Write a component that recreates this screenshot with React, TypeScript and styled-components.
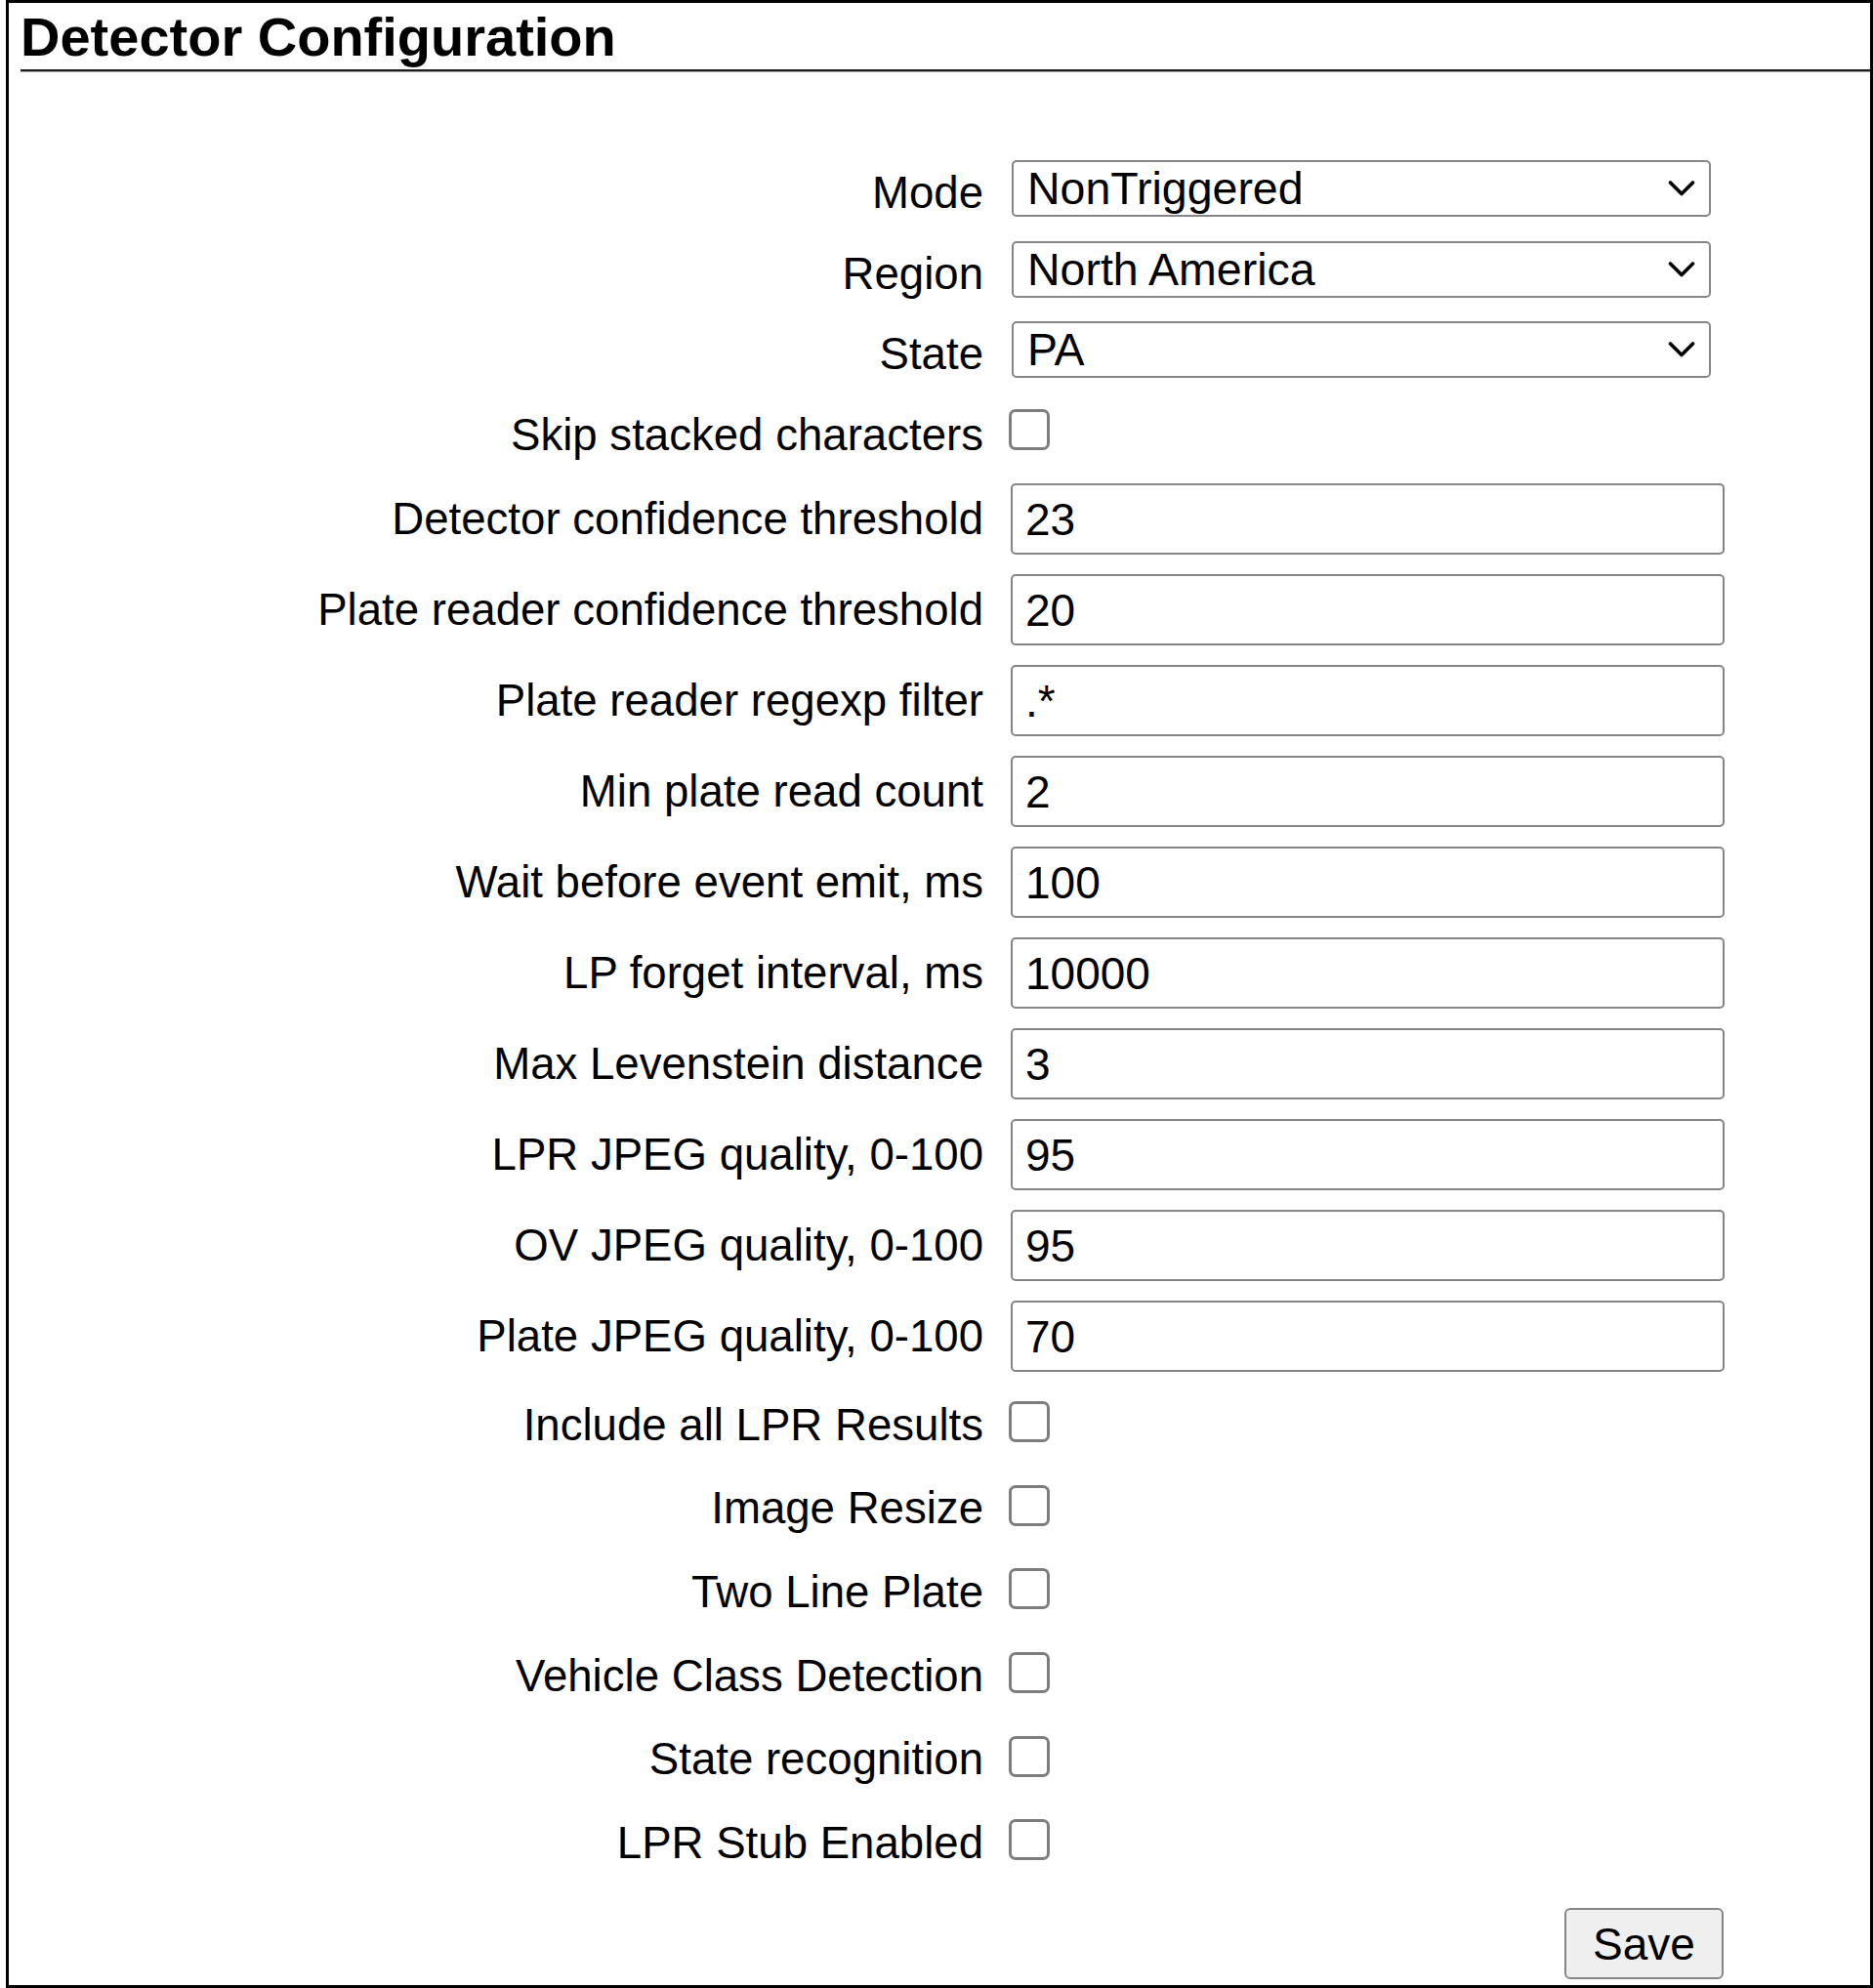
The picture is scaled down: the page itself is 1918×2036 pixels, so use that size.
import React from 'react';
import styled, { createGlobalStyle } from 'styled-components';

const GlobalStyle = createGlobalStyle`
  html, body { margin: 0; padding: 0; background: #fff; overflow: hidden; }
  body { font-family: "Liberation Sans", Arial, Helvetica, sans-serif; color: #000; }
`;

const Frame = styled.div`
  box-sizing: border-box;
  margin-left: 6px;
  height: 2036px;
  border: 3px solid #000;
  padding-top: 3px;
  display: flex;
  flex-direction: column;
`;

const Title = styled.h2`
  margin: 0 0 0 12px;
  padding: 0 0 2px 0;
  font-size: 56px;
  font-weight: 700;
  line-height: 63px;
  text-indent: 0;
  border-bottom: 2px solid #1e1e1e;
  box-shadow: 0 1px 0 #a0a0a0;
`;

const Form = styled.form`
  margin: 79px 0 0 0;
  display: flex;
  flex-direction: column;
`;

const Row = styled.div<{ $h: number }>`
  display: grid;
  grid-template-columns: 998px 731px;
  column-gap: 28px;
  align-items: center;
  height: ${p => p.$h}px;
`;

const Label = styled.label<{ $pad?: number }>`
  text-align: right;
  font-size: 45.6px;
  line-height: 53px;
  white-space: nowrap;
  padding-top: ${p => p.$pad ?? 0}px;
`;

const SelectWrap = styled.div`
  position: relative;
  width: 716px;
  height: 58px;
  margin-left: 1px;
`;

const Select = styled.select`
  appearance: none;
  -webkit-appearance: none;
  box-sizing: border-box;
  width: 100%;
  height: 100%;
  margin: 0;
  border: 2px solid #858585;
  border-radius: 5px;
  padding: 0 60px 0 14px;
  background: #fff;
  color: #000;
  font-family: inherit;
  font-size: 46.5px;
  outline: none;
`;

const Chevron = styled.svg`
  position: absolute;
  right: 16px;
  top: 50%;
  transform: translateY(-50%);
  pointer-events: none;
`;

const TextInput = styled.input`
  box-sizing: border-box;
  width: 731px;
  height: 73px;
  margin: 0;
  border: 2px solid #858585;
  border-radius: 5px;
  padding: 0 12px 0 13px;
  background: #fff;
  color: #000;
  font-family: inherit;
  font-size: 46px;
  outline: none;
`;

const Checkbox = styled.input`
  appearance: none;
  -webkit-appearance: none;
  box-sizing: border-box;
  width: 42px;
  height: 42px;
  margin: 0 0 0 -2px;
  border: 3px solid #7d7d7d;
  border-radius: 7px;
  background: #fff;
`;

const Footer = styled.div`
  display: grid;
  grid-template-columns: 998px 731px;
  column-gap: 28px;
  margin-top: 25px;
`;

const SaveButton = styled.button`
  grid-column: 2;
  justify-self: end;
  box-sizing: border-box;
  width: 163px;
  height: 73px;
  margin-right: 1px;
  padding: 0;
  border: 2px solid #858585;
  border-radius: 6px;
  background: #efefef;
  color: #000;
  font-family: inherit;
  font-size: 46px;
`;

type SelectField = { label: string; value: string; options: string[] };

const selects: SelectField[] = [
  { label: 'Mode', value: 'NonTriggered', options: ['NonTriggered', 'Triggered'] },
  { label: 'Region', value: 'North America', options: ['North America', 'Europe', 'Asia'] },
  { label: 'State', value: 'PA', options: ['PA', 'NY', 'NJ', 'CA'] },
];

const inputs: [string, string][] = [
  ['Detector confidence threshold', '23'],
  ['Plate reader confidence threshold', '20'],
  ['Plate reader regexp filter', '.*'],
  ['Min plate read count', '2'],
  ['Wait before event emit, ms', '100'],
  ['LP forget interval, ms', '10000'],
  ['Max Levenstein distance', '3'],
  ['LPR JPEG quality, 0-100', '95'],
  ['OV JPEG quality, 0-100', '95'],
  ['Plate JPEG quality, 0-100', '70'],
];

const checks = [
  'Include all LPR Results',
  'Image Resize',
  'Two Line Plate',
  'Vehicle Class Detection',
  'State recognition',
  'LPR Stub Enabled',
];

const slug = (s: string) => s.toLowerCase().replace(/[^a-z0-9]+/g, '-');

const CheckRow: React.FC<{ label: string; pad: number }> = ({ label, pad }) => (
  <Row $h={85.7}>
    <Label htmlFor={slug(label)} $pad={pad}>{label}</Label>
    <div>
      <Checkbox type="checkbox" id={slug(label)} />
    </div>
  </Row>
);

export default function App() {
  return (
    <>
      <GlobalStyle />
      <Frame>
        <Title>Detector Configuration</Title>
        <Form onSubmit={e => e.preventDefault()}>
          {selects.map(s => (
            <Row $h={82.5} key={s.label}>
              <Label htmlFor={slug(s.label)} $pad={9}>{s.label}</Label>
              <SelectWrap>
                <Select id={slug(s.label)} defaultValue={s.value}>
                  {s.options.map(o => (
                    <option key={o} value={o}>{o}</option>
                  ))}
                </Select>
                <Chevron width="28" height="18" viewBox="0 0 28 18">
                  <polyline points="2.5,3 14,14.5 25.5,3" fill="none" stroke="#000" strokeWidth="3.6" strokeLinecap="round" strokeLinejoin="round" />
                </Chevron>
              </SelectWrap>
            </Row>
          ))}
          <CheckRow label="Skip stacked characters" pad={6} />
          {inputs.map(([label, value]) => (
            <Row $h={93} key={label}>
              <Label htmlFor={slug(label)}>{label}</Label>
              <TextInput type="text" id={slug(label)} defaultValue={value} />
            </Row>
          ))}
          {checks.map(c => (
            <CheckRow key={c} label={c} pad={2} />
          ))}
          <Footer>
            <SaveButton type="submit">Save</SaveButton>
          </Footer>
        </Form>
      </Frame>
    </>
  );
}
